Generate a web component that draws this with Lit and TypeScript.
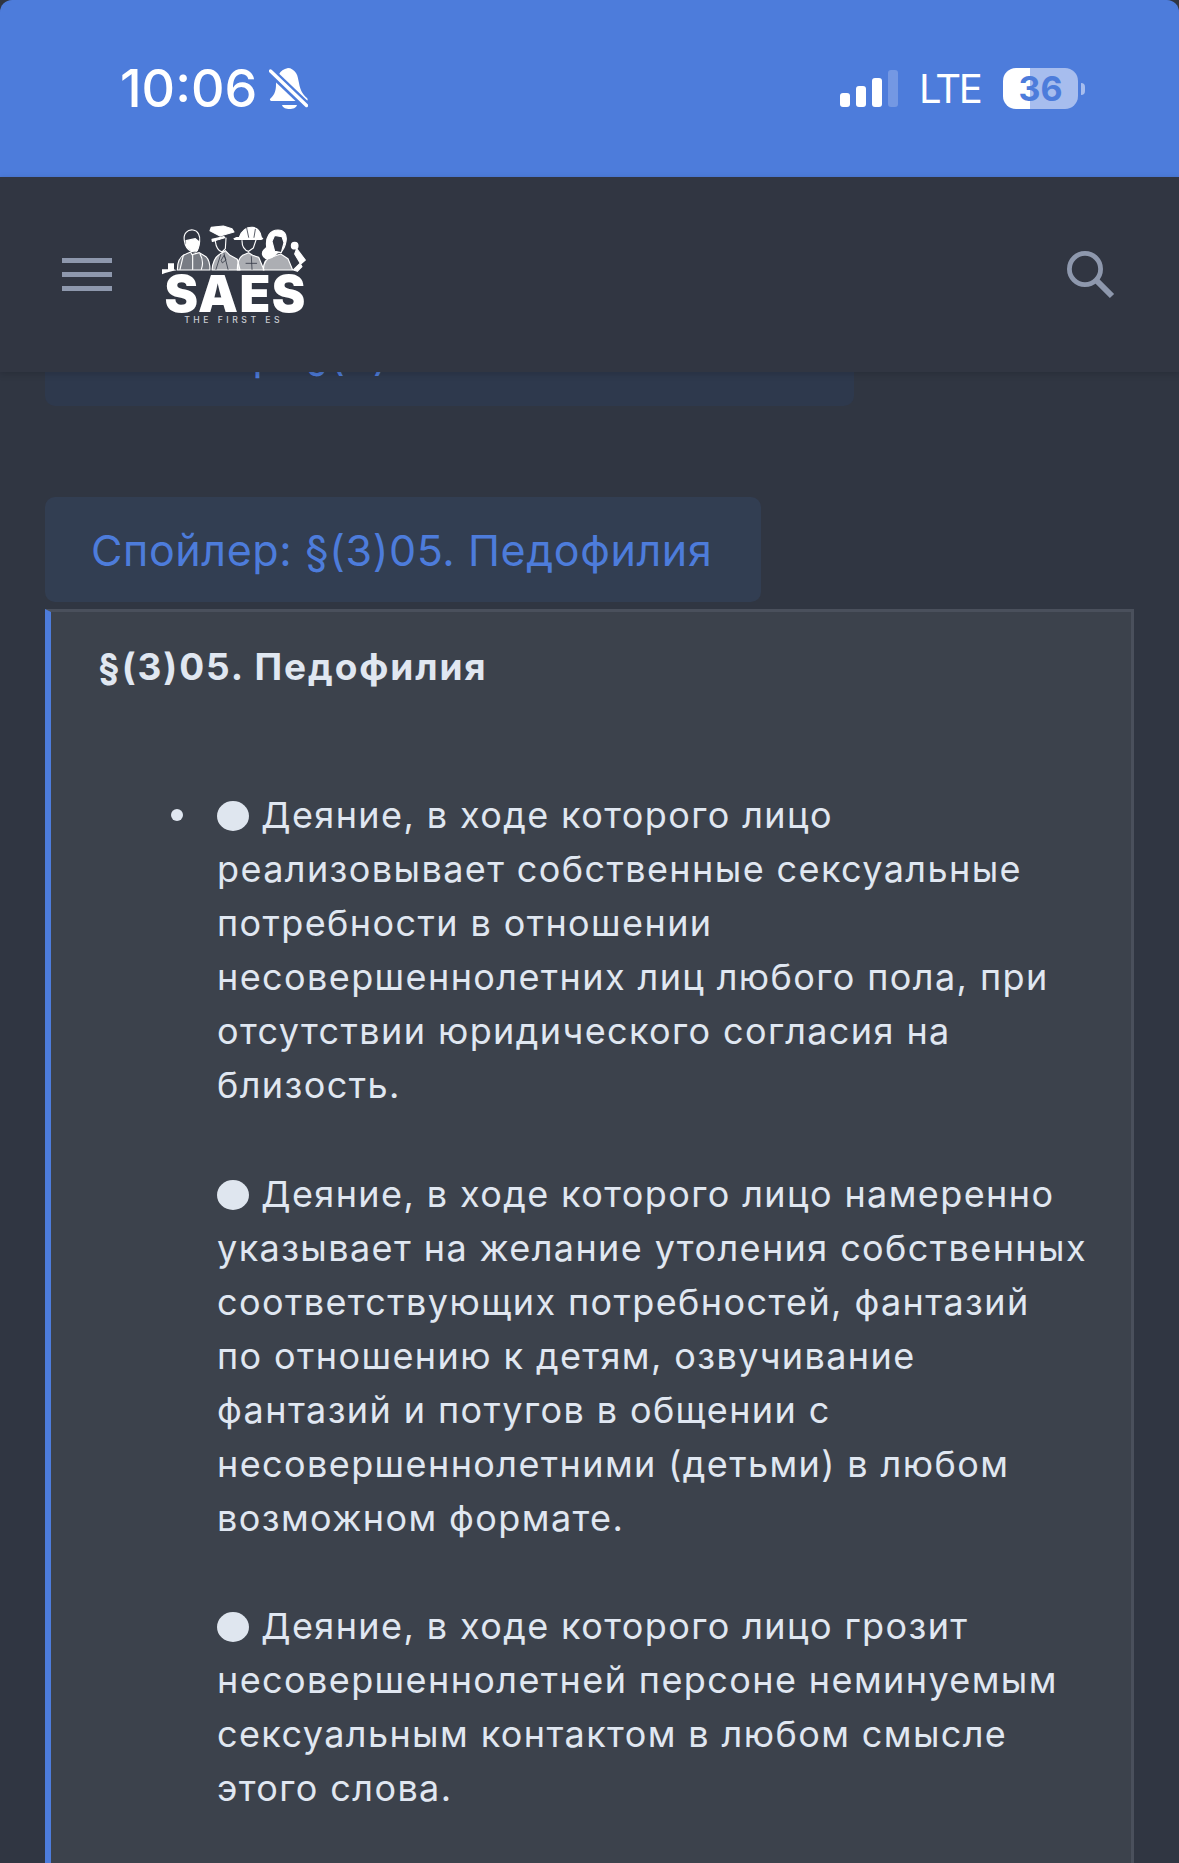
import { LitElement, css, html, svg } from 'lit';
import { customElement } from 'lit/decorators.js';

const paragraphs = [
  'Деяние, в ходе которого лицо реализовывает собственные сексуальные потребности в отношении несовершеннолетних лиц любого пола, при отсутствии юридического согласия на близость.',
  'Деяние, в ходе которого лицо намеренно указывает на желание утоления собственных соответствующих потребностей, фантазий по\u00a0отношению к детям, озвучивание фантазий и потугов в общении с несовершеннолетними (детьми) в любом возможном формате.',
  'Деяние, в ходе которого лицо грозит несовершеннолетней персоне неминуемым сексуальным контактом в любом смысле этого слова.'
];

const logoFigures = svg`
  <g fill="none" stroke="#fff" stroke-width="3.4" stroke-linejoin="round" stroke-linecap="round">
    <path d="M82 180c0-24 8-42 26-48l14-6 4 8 22-6 20 12c8 8 12 22 12 40z" fill="rgba(255,255,255,0.35)"/>
    <path d="M103 92c-4-22 10-34 26-32 16 2 22 18 20 34-1 14-4 26-12 32l-14-2c-12-6-18-18-20-32z" fill="#313642"/>
    <path d="M108 92l28-6 12 10-6 26-18 0-14-12z" fill="#fff"/>
    <path d="M100 136l-10 42M150 132c8 14 10 30 4 46M128 134v44"/>
    <path d="M186 180c2-24 10-40 24-48l16-10 14 14 22 12 8 32z" fill="rgba(255,255,255,0.6)"/>
    <path d="M180 62l30 16 42-12-6-10-26-8-36 4zM186 88l36-8 3 4-38 10z" fill="#fff"/>
    <path d="M196 94c2 16 8 28 20 32l10-10 2-32" fill="#313642"/>
    <path d="M212 134l-14 44M222 130l12 48M214 150l8-14 6 14-10 8z" stroke="#313642" stroke-width="2.4"/>
    <path d="M262 180c0-20 4-36 16-44l18-8 12 8 18 6 16 38z" fill="rgba(255,255,255,0.6)"/>
    <path d="M276 92c0 18 6 28 20 32l14-10 8-24" fill="#313642"/>
    <path d="M252 86c8-4 12-4 16-4 6-20 22-32 40-30 14 2 24 14 26 30l4 4-4 2h-80z" fill="#fff"/>
    <path d="M290 54l6 28M316 58l-4 24M304 140l2 38M288 160h32" stroke="#313642" stroke-width="2.4"/>
    <path d="M340 180c0-24 10-36 28-40l24-8 22 14 14 34z" fill="rgba(255,255,255,0.6)"/>
    <path d="M350 110c-4-28 10-50 34-50 18 0 28 14 24 34-2 12-8 26-16 32l-12 4c-6 8-18 16-32 16-12-6-14-18-6-26 4-4 8-6 8-10z" fill="#fff"/>
    <path d="M366 94l8-18 22 4 6 18-8 30-20-4z" fill="#313642"/>
    <circle cx="434" cy="107" r="10" fill="#fff"/>
    <path d="M440 116l26 34-14 12-18-30zM450 160l6 10-14 14-12-4z" fill="#fff"/>
  </g>
  <path d="M36 178h18v-18h18v18l8 3c-16 2-32 7-44 12z" fill="#fff"/>
`;

@customElement('app-root')
export class AppRoot extends LitElement {
  static styles = css`
    :host {
      display: block;
      height: 1863px;
      overflow: hidden;
      background: #303642;
      font-family: Inter, 'Noto Sans', sans-serif;
    }

    .status {
      height: 177px;
      box-sizing: border-box;
      padding: 0 94px 0 120px;
      display: flex;
      align-items: center;
      justify-content: space-between;
      background: #4d7cdb;
      color: #fff;
      border-radius: 12px 12px 0 0;
    }

    .status-left,
    .status-right {
      display: flex;
      align-items: center;
    }

    .time {
      font-size: 52px;
      font-weight: 500;
      line-height: 60px;
      margin-right: 12px;
    }

    .bell {
      display: block;
      margin-top: -1px;
    }

    .signal {
      display: block;
      margin-right: 21px;
    }

    .lte {
      font-size: 40px;
      line-height: 50px;
      margin-right: 25px;
      width: 59px;
      letter-spacing: -2.4px;
    }

    .battery {
      display: flex;
      align-items: center;
      gap: 3px;
    }

    .battery-body {
      width: 75px;
      height: 41px;
      border-radius: 13px;
      background: linear-gradient(to right, #fff 36%, #a7bdee 36%);
      color: #4d7cdb;
      font-size: 34px;
      font-weight: 700;
      line-height: 41px;
      text-align: center;
    }

    .battery-nub {
      width: 4px;
      height: 12px;
      border-radius: 0 6px 6px 0;
      background: #a7bdee;
    }

    .header {
      position: relative;
      z-index: 1;
      height: 195px;
      box-sizing: border-box;
      padding: 0 64px 0 62px;
      display: flex;
      align-items: center;
      background: #313642;
      box-shadow: 0 2px 6px rgba(20, 24, 32, 0.25);
    }

    .menu {
      width: 50px;
      display: flex;
      flex-direction: column;
      gap: 9px;
      margin-right: 38px;
    }

    .menu span {
      display: block;
      height: 5px;
      background: #8e98ad;
    }

    .logo {
      display: block;
    }

    .search {
      display: block;
      margin-left: auto;
    }

    .content {
      padding: 0 45px;
    }

    .spoiler {
      width: fit-content;
      box-sizing: border-box;
      height: 105px;
      padding: 0 49px 0 46px;
      display: flex;
      align-items: center;
      background: #323e52;
      border-radius: 10px;
      color: #4d7cdb;
      font-size: 43px;
      line-height: 54px;
      letter-spacing: 0.6px;
    }

    .spoiler.previous {
      width: 809px;
      margin-top: -71px;
      margin-bottom: 91px;
      background: #2e394d;
    }

    .box {
      margin-top: 7px;
      background: #3c424c;
      border: 3px solid #4a505c;
      border-left: 6px solid #4d7cdb;
      padding: 28px 40px 100px 47px;
      color: #e0e7f1;
      font-size: 36px;
      line-height: 54.08px;
      letter-spacing: 1.4px;
    }

    .title {
      font-size: 37px;
      font-weight: 700;
      letter-spacing: 1.9px;
    }

    ul {
      margin: 94px 0 0;
      padding: 0 0 0 119px;
      list-style: none;
    }

    li {
      position: relative;
    }

    li::before {
      content: '';
      position: absolute;
      left: -46px;
      top: 21px;
      width: 12px;
      height: 12px;
      border-radius: 50%;
      background: #e0e7f1;
    }

    .dot {
      display: inline-block;
      width: 32px;
      height: 30px;
      margin-right: 12px;
      border-radius: 50%;
      background: #dfe6ef;
      vertical-align: -3px;
    }
  `;

  render() {
    return html`
      <div class="status">
        <div class="status-left">
          <span class="time">10:06</span>
          <svg class="bell" width="39" height="41" viewBox="0 0 39 41">
            <path d="M19 0c3 0 6 2 8 5 2 3 2 6 3 10 1 6 3 11 8 15 1 1 1 3-1 3H3c-2 0-3-2-1-3 4-4 5-8 5-14 1-7 3-14 12-16z" fill="#fff"/>
            <path d="M13 37h15c-1 3-4 4-7.500 4S14 40 13 37z" fill="#fff"/>
            <path d="M-1 1l41 39" stroke="#4d7cdb" stroke-width="8.500"/>
            <path d="M1.500 3l36 34.500" stroke="#fff" stroke-width="3.400" stroke-linecap="round"/>
          </svg>
        </div>
        <div class="status-right">
          <svg class="signal" width="58" height="37" viewBox="0 0 58 37" fill="#fff">
            <rect x="0" y="23" width="10" height="14" rx="3"/>
            <rect x="16" y="16" width="10" height="21" rx="3"/>
            <rect x="32" y="8" width="10" height="29" rx="3"/>
            <rect x="48" y="0" width="10" height="37" rx="3" opacity="0.22"/>
          </svg>
          <span class="lte">LTE</span>
          <div class="battery">
            <div class="battery-body">36</div>
            <div class="battery-nub"></div>
          </div>
        </div>
      </div>

      <div class="header">
        <div class="menu"><span></span><span></span><span></span></div>
        <svg class="logo" width="170" height="130" viewBox="0 0 510 390">
          ${logoFigures}
          <text x="257" y="305" text-anchor="middle" fill="#fff" font-family="Inter, sans-serif" font-size="151" font-weight="900" letter-spacing="4.300">SAES</text>
          <text x="251" y="340" text-anchor="middle" fill="#c9ccd2" font-family="Inter, sans-serif" font-size="26" font-weight="500" letter-spacing="10.500">THE FIRST ES</text>
        </svg>
        <svg class="search" width="48" height="48" viewBox="0 0 48 48" fill="none" stroke="#8e98ad">
          <circle cx="18" cy="18" r="15.600" stroke-width="4.800"/>
          <path d="M30 30l15 15" stroke-width="6"/>
        </svg>
      </div>

      <div class="content">
        <div class="spoiler previous">Спойлер: §(3)04. Неисполнение</div>
        <div class="spoiler">Спойлер: §(3)05. Педофилия</div>
        <div class="box">
          <div class="title">§(3)05. Педофилия</div>
          <ul>
            <li>
              ${paragraphs.map(
                (text, i) => html`${i > 0 ? html`<br /><br />` : ''}<span class="dot"></span>${text}`
              )}
            </li>
          </ul>
        </div>
      </div>
    `;
  }
}
